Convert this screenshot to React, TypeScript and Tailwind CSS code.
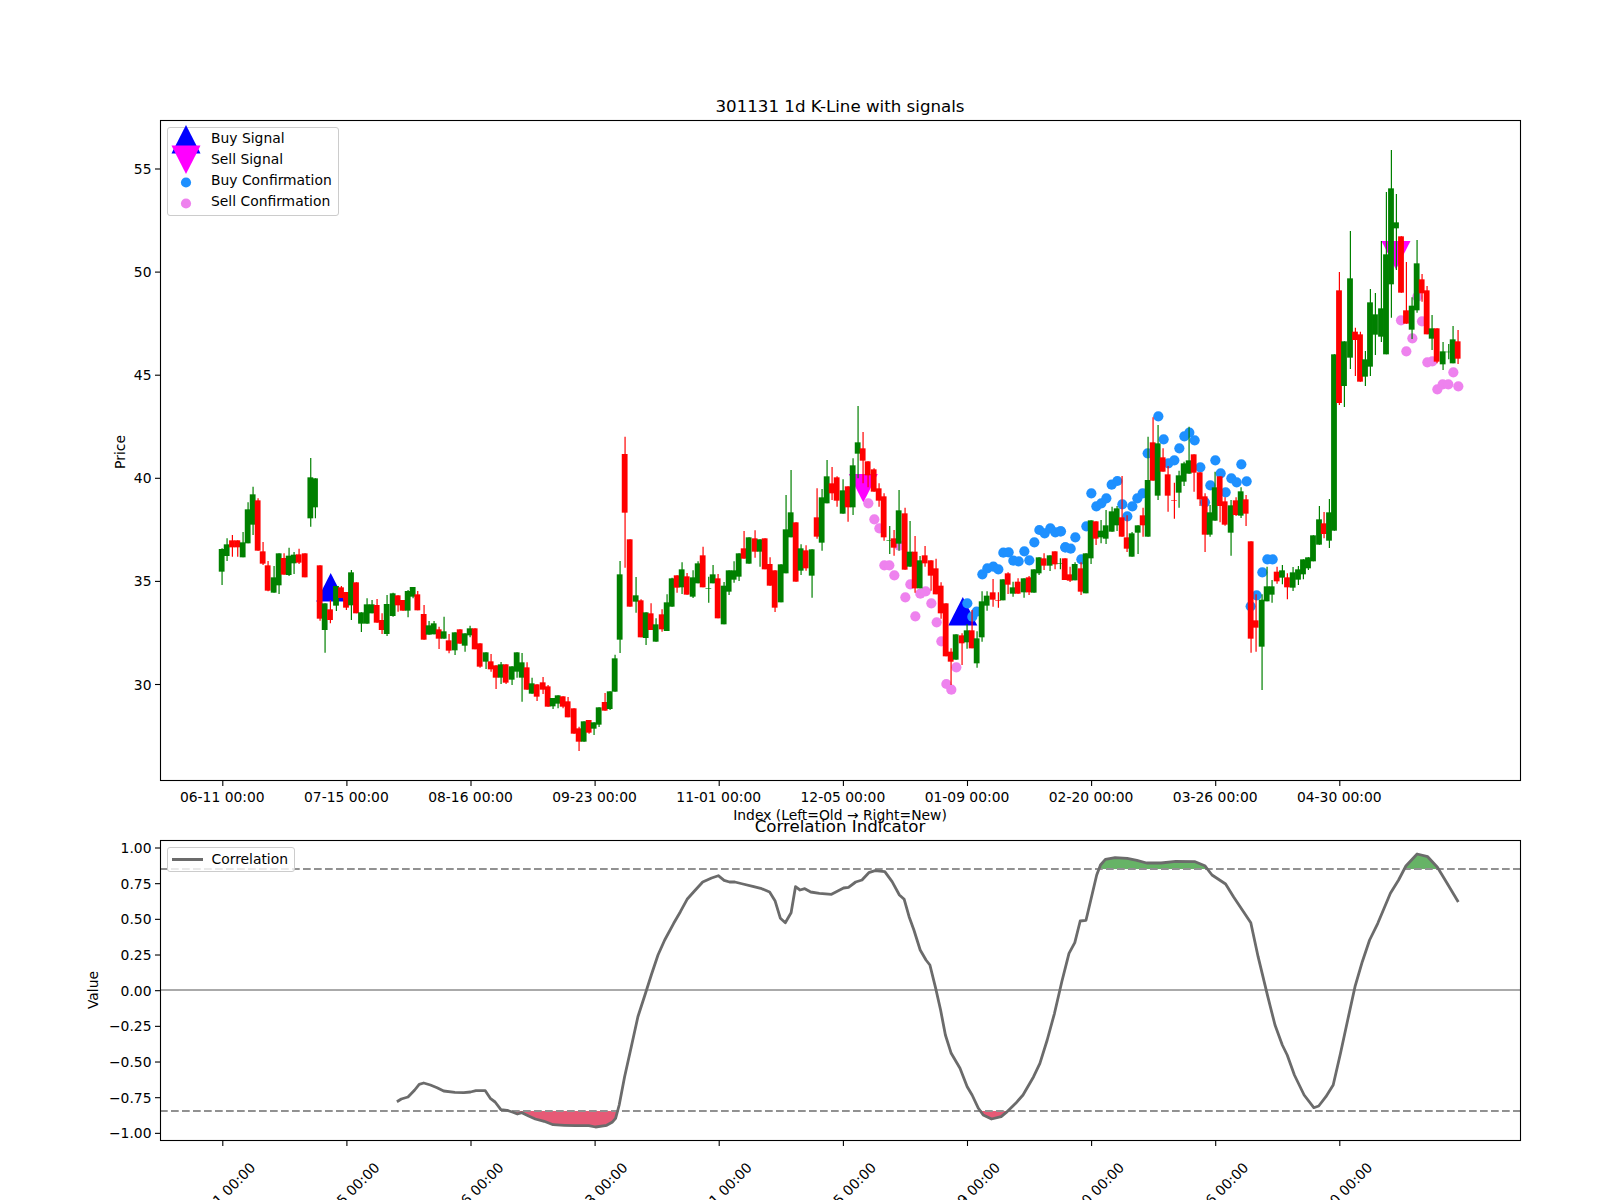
import React from "react";

type Candle = { x: number; green: boolean; wt: number; bt: number; bb: number; wb: number };

const parse = (ox: number, oy: number, s: string): Candle[] =>
  s.split(";").map((r) => r.trim()).filter(Boolean).map((r) => {
    const [x, c, wt, bt, bb, wb] = r.split(/\s+/);
    return { x: ox + +x / 3, green: c === "G", wt: oy + +wt / 3, bt: oy + +bt / 3, bb: oy + +bb / 3, wb: oy + +wb / 3 };
  });

const candles: Candle[] = [
  ...parse(200, 450, `65 G 295 297 365 405;80 G 265 283 318 333;96 R 255 271 292 320;112 R 271 271 292 320;128 G 246 277 322 322;143 G 157 178 280 280;158 G 110 133 224 255;173 R 145 151 302 302;188 R 276 304 341 345;203 R 333 346 422 424;221 G 348 382 428 428;236 G 310 310 406 432;251 R 310 324 374 374;266 G 293 317 375 378;281 G 306 314 340 372;296 R 296 313 338 342;314 R 310 310 382 382;331 G 24 82 205 230;345 G 85 85 172 205;359 R 346 346 506 512;374 G 460 460 540 608;390 R 450 478 510 520;408 G 408 408 467 483;423 R 408 412 444 444;438 R 426 426 473 480;453 G 360 367 466 510;468 R 397 397 490 490;483 G 487 487 521 546;500 G 445 463 521 521;515 G 450 463 490 490;530 R 447 465 518 518;545 R 490 510 540 552;560 G 435 462 552 558;578 G 428 430 498 500;593 R 436 436 466 485;608 R 450 450 482 482;623 G 420 423 482 502;638 G 411 411 440 445;652 R 423 433 481 481`),
  ...parse(420, 430, `11 R 525 552 629 629;26 G 573 586 614 614;41 G 573 580 613 613;56 R 590 598 626 657;71 G 560 604 626 626;86 R 612 631 662 670;104 G 607 607 661 675;119 R 598 598 641 641;134 G 610 610 647 665;149 G 587 595 616 622;164 R 595 595 658 658;179 R 640 640 710 713;197 G 667 667 695 717;212 R 672 694 718 725;227 R 706 706 743 777;242 G 696 703 743 762;257 R 703 703 758 762;275 G 709 709 749 765;290 G 667 667 725 743;305 G 669 697 743 815;320 R 697 712 779 779;335 G 743 760 791 791;350 R 763 763 800 813;368 R 741 757 779 792;383 R 765 769 830 830;398 G 804 804 829 837;413 G 796 796 821 835;428 R 799 799 830 835;443 R 801 814 862 862;461 R 835 835 911 911;476 R 890 895 935 963;491 G 874 874 935 935;506 R 870 870 908 911;521 G 877 877 896 915;536 G 832 832 884 891;554 R 789 816 842 842;569 G 784 784 837 840;584 G 674 685 785 785;599 G 393 433 629 669;614 R 20 72 248 413;629 R 328 328 530 530;647 G 441 496 515 548`),
  ...parse(640, 400, `2 R 598 601 712 712;17 G 637 637 714 735;32 R 610 640 690 690;47 G 655 673 725 725;65 R 628 643 688 695;80 G 583 607 693 693;95 G 533 535 620 620;110 R 526 526 563 578;125 G 487 508 562 582;140 R 519 529 584 584;158 G 511 532 590 594;173 G 484 490 550 550;188 R 440 466 562 562;205 G 530 565 566 608;218 G 495 523 550 550;233 R 522 535 655 655;251 G 546 557 673 673;266 G 511 511 575 585;281 G 484 511 539 548;296 G 460 460 530 543;311 R 393 445 476 476;326 G 412 412 491 491;344 R 391 415 455 473;359 G 418 418 455 500;374 R 415 415 508 508;389 R 472 492 557 557;404 R 511 511 623 636;422 G 493 493 607 607;437 G 285 388 520 520;452 G 210 337 412 412;467 R 367 367 545 545;482 G 433 445 512 525;497 R 436 451 505 512;515 G 448 448 527 593;530 R 265 352 410 416;545 G 267 292 428 452;560 G 180 229 310 310;575 R 201 250 280 300;590 R 229 232 302 320;608 G 238 271 341 341;623 R 259 259 322 365;638 G 175 196 322 345;653 G 18 127 161 235`),
  ...parse(850, 400, `38 R 96 145 182 250;53 R 184 184 226 262;71 R 205 208 275 275;86 R 250 265 302 320;101 R 280 289 412 422;118 G 378 420 421 462;131 R 390 415 443 467;146 G 270 331 431 452;164 R 323 340 509 509;179 G 363 455 500 500;194 R 408 455 565 578;209 G 468 481 565 565;224 R 438 466 490 500;242 R 481 481 527 572;257 R 476 505 583 583;272 R 547 557 640 656;287 R 610 610 769 769;302 R 745 755 785 855;317 G 703 703 779 779;335 R 700 706 730 795;350 G 672 691 727 746;365 R 630 691 745 745;380 G 694 715 790 803;395 G 574 604 712 725;410 G 574 587 617 632;428 R 537 577 599 620;444 R 577 600 601 623;458 G 538 538 601 601;473 R 517 520 554 582;488 G 545 562 581 590;503 R 535 545 581 581;521 G 535 535 577 593;536 R 528 532 577 585;551 G 508 508 578 578;566 G 472 472 520 525;581 R 460 475 497 510;599 G 466 466 497 513;614 R 454 454 493 508;630 G 475 490 491 508`),
  ...parse(1060, 400, `14 R 475 475 540 540;29 R 500 523 542 546;44 G 487 492 541 541;62 R 487 505 575 585;77 G 460 460 580 580;92 G 361 361 475 492;107 R 364 364 416 435;122 G 360 392 412 430;137 G 330 376 416 432;155 G 320 334 395 395;170 G 318 325 376 393;185 R 228 352 410 410;200 R 346 412 446 456;215 G 396 400 470 470;233 G 376 376 398 462;248 R 323 346 376 410;263 G 110 240 410 410;278 R 52 127 242 242;293 G 75 130 287 300;308 R 145 172 215 215;323 R 198 223 287 335;342 R 248 300 301 356;356 G 212 226 278 323;371 G 185 190 245 258;386 G 80 181 221 221;401 R 163 163 218 275;419 R 217 217 298 318;434 R 280 289 404 456;449 G 315 337 404 410;464 G 215 262 362 362;479 R 229 229 318 367;494 R 292 304 374 377;512 G 300 316 398 467;527 R 292 301 345 348;542 G 262 274 347 354;557 R 285 298 341 378;572 R 424 424 716 758;587 R 583 661 683 755;605 G 583 599 740 870;620 G 500 559 604 604;635 G 540 559 584 608;650 R 500 515 544 551`),
  ...parse(1270, 490, `36 G 225 241 263 283;51 R 250 262 292 328;68 G 231 247 293 303;84 G 228 238 269 285;99 G 208 208 253 268;114 G 202 202 235 240;129 G 136 136 214 214;147 G 48 88 164 164;161 R 66 100 132 145;177 G 27 67 152 174`),
  ...parse(1250, 140, `252 G 643 643 1172 1172;267 R 396 451 789 795;282 G 604 604 738 801;300 G 273 415 653 687;315 R 563 575 600 708;330 R 575 583 725 725;345 G 633 658 710 738;360 G 447 487 680 708;375 G 459 523 584 645;393 G 303 505 590 606;408 G 156 343 643 643;423 G 30 145 433 533;438 G 162 247 265 390;453 R 289 289 458 458;468 R 366 511 551 551;485 G 472 497 569 597;500 G 300 370 511 518;515 R 402 418 460 485;530 R 438 451 583 583;545 G 525 565 596 630;560 R 565 565 665 670;578 G 606 634 673 690;595 G 612 635 636 658;608 G 558 598 670 670;623 R 570 604 656 672`),
];

const dots = (ox: number, oy: number, s: string) =>
  s.split(";").map((r) => { const [x, y] = r.split(",").map(Number); return [ox + x / 3, oy + y / 3]; });

const blueDots = [
  ...dots(850, 400, "352,610;367,650;380,635;397,523;412,505;430,500;445,508;460,458;476,457;490,482;506,484;523,454;538,481;553,427;568,390;584,400;601,385;616,397;631,394;646,442"),
  ...dots(1060, 400, "3,394;16,442;32,446;46,412;64,478;79,379;94,280;109,319;124,310;139,295;155,254;172,243;187,313;202,349;217,319;232,295;248,280;263,160;295,49;311,118;325,190;343,181;358,145;373,109;388,98;404,121;421,202;435,307;451,256;466,181;482,220;497,277;514,235;530,247;544,193;560,244;572,619;590,586;607,517;622,478;638,478"),
];
const pinkDots = [
  ...dots(850, 400, "55,310;73,358;88,385;103,496;118,496;133,526;148,437;166,592;181,553;196,649;211,581;227,574;244,610;260,667;274,724;289,852;304,869;319,802"),
  ...dots(1250, 140, "453,541;469,634;487,595;502,470;516,544;532,667;547,664;562,748;578,733;595,733;610,697;625,739"),
];

const line = (ox: number, sx: number, s: string) =>
  s.split(";").map((r) => { const [x, y] = r.split(",").map(Number); return [ox + x / sx, 780 + y / 3]; });

const corr = [
  ...line(100, 2.24, "665,965;675,957;690,951;705,930;715,913;725,909;740,915;755,923;770,933;795,937;815,938;830,936;842,932;863,932;875,956;885,966;898,989;912,991;925,997;935,1002;945,998;960,1008;975,1017;995,1024;1015,1034;1040,1036;1065,1037;1095,1037;1110,1041;1135,1036;1147,1027;1155,1015;1163,975;1175,890;1190,800;1205,710;1222,640;1235,585;1250,525;1265,480;1285,430;1300,395;1315,358;1330,335;1350,306;1370,294;1385,287;1398,301;1410,306;1422,306;1440,312;1462,319;1480,325;1500,336;1512,362;1524,415;1535,428;1548,398;1558,320"),
  ...line(800, 2.063, "0,330;10,326;22,336;40,340;65,343;90,324;100,322;115,306;128,300;142,278;155,272;175,275;190,305;205,345;215,358;225,410;235,450;248,510;260,540;268,555;280,625;290,690;300,765;312,820;330,865;345,920;355,945;368,985;378,1005;395,1017;415,1010;425,998;445,970;460,945;482,890;495,850;510,780;525,700;540,605;555,520;567,488;578,423;590,421;600,360;612,285;620,255;630,238;650,233;675,235;695,241;715,249;745,249;775,244;815,245;835,257;850,285;878,312;895,352;915,395;930,428;945,530;965,650;980,735;995,795;1005,825;1020,885;1040,945;1060,983;1070,978;1085,950;1100,915;1115,820;1130,720;1145,620;1160,545;1175,480;1192,430;1205,385;1218,340;1235,300;1250,258;1273,222;1295,230;1315,262;1335,310;1358,366"),
];

const toPts = (p: number[][]) => p.map((q) => q.map((v) => v.toFixed(1)).join(",")).join(" ");

const regions = (thr: number, above: boolean) => {
  const out: number[][][] = [];
  let cur: number[][] = [];
  const inside = (y: number) => (above ? y < thr : y > thr);
  corr.forEach((p, i) => {
    const prev = corr[i - 1];
    if (prev && inside(prev[1]) !== inside(p[1])) {
      const t = (thr - prev[1]) / (p[1] - prev[1]);
      const cross = [prev[0] + t * (p[0] - prev[0]), thr];
      cur.push(cross);
      if (cur.length > 2) out.push(cur);
      cur = inside(p[1]) ? [cross] : [];
    }
    if (inside(p[1])) cur.push(p);
  });
  return out;
};

const ticksX = [222.8, 346.9, 471, 595.1, 719.2, 843.4, 967.5, 1091.6, 1215.7, 1339.8];
const labelsX = ["06-11 00:00", "07-15 00:00", "08-16 00:00", "09-23 00:00", "11-01 00:00", "12-05 00:00", "01-09 00:00", "02-20 00:00", "03-26 00:00", "04-30 00:00"];
const priceTicks = [55, 50, 45, 40, 35, 30];
const py = (p: number) => 169 + (55 - p) * 20.62;
const corrTicks = ["1.00", "0.75", "0.50", "0.25", "0.00", "−0.25", "−0.50", "−0.75", "−1.00"];
const cy = (i: number) => 848 + i * 35.67;

const Up = ({ cx, top, h = 28.5, w = 29 }: { cx: number; top: number; h?: number; w?: number }) => (
  <polygon points={`${cx},${top} ${cx + w / 2},${top + h} ${cx - w / 2},${top + h}`} fill="#0000ff" />
);
const Down = ({ cx, top, h = 28.5, w = 29 }: { cx: number; top: number; h?: number; w?: number }) => (
  <polygon points={`${cx - w / 2},${top} ${cx + w / 2},${top} ${cx},${top + h}`} fill="#ff00ff" />
);

const legendItems = [
  { label: "Buy Signal", icon: <Up cx={15} top={-3} /> },
  { label: "Sell Signal", icon: <Down cx={15} top={-3.5} /> },
  { label: "Buy Confirmation", icon: <circle cx={15} cy={12.5} r={5.1} fill="#1e90ff" /> },
  { label: "Sell Confirmation", icon: <circle cx={15} cy={12.5} r={5.1} fill="#ee82ee" /> },
];

export default function App() {
  return (
    <div className="w-[1600px] h-[1200px] bg-white overflow-hidden flex flex-col font-['DejaVu_Sans',sans-serif] text-[13.89px] text-black">
      <section className="relative h-[815px] shrink-0">
        <svg width={1600} height={815} viewBox="0 0 1600 815" className="block overflow-visible">
          <text x={840} y={112} textAnchor="middle" className="text-[16.67px]">301131 1d K-Line with signals</text>
          <Up cx={330.7} top={573} />
          <Up cx={962.8} top={597} />
          <Down cx={863.3} top={474} />
          <Down cx={1396} top={241} />
          {pinkDots.map(([x, y], i) => <circle key={i} cx={x} cy={y} r={5.1} fill="#ee82ee" />)}
          {blueDots.map(([x, y], i) => <circle key={i} cx={x} cy={y} r={5.1} fill="#1e90ff" />)}
          {candles.map((c, i) => {
            const col = c.green ? "#008000" : "#ff0000";
            return (
              <g key={i}>
                <line x1={c.x + 0.4} x2={c.x + 0.4} y1={c.wt} y2={c.wb} stroke={col} strokeWidth={1.2} />
                <rect x={c.x - 2.9} y={c.bt} width={5.8} height={Math.max(c.bb - c.bt, 0.6)} fill={col} />
              </g>
            );
          })}
          <rect x={160.5} y={120.5} width={1360} height={660} fill="none" stroke="#000" strokeWidth={1.1} />
          {priceTicks.map((p) => (
            <g key={p}>
              <line x1={155} x2={160} y1={py(p)} y2={py(p)} stroke="#000" strokeWidth={1.1} />
              <text x={151.5} y={py(p) + 5} textAnchor="end">{p}</text>
            </g>
          ))}
          {ticksX.map((x, i) => (
            <g key={i}>
              <line x1={x} x2={x} y1={781} y2={786} stroke="#000" strokeWidth={1.1} />
              <text x={x - 0.5} y={801.5} textAnchor="middle">{labelsX[i]}</text>
            </g>
          ))}
          <text transform="translate(125 452) rotate(-90)" textAnchor="middle">Price</text>
          <text x={840} y={820} textAnchor="middle">Index (Left=Old → Right=New)</text>
        </svg>
        <div className="absolute left-[167px] top-[127px] w-[172px] h-[88.5px] rounded-[3px] border border-[#cccccc] bg-white/80 flex flex-col">
          {legendItems.map((it) => (
            <div key={it.label} className="flex items-center h-[21px] pl-[3.4px] gap-[9.6px] leading-none">
              <svg width={30} height={21} className="overflow-visible shrink-0">{it.icon}</svg>
              <span>{it.label}</span>
            </div>
          ))}
        </div>
      </section>
      <section className="relative h-[385px] shrink-0">
        <svg width={1600} height={385} viewBox="0 815 1600 385" className="block overflow-visible">
          <text x={840} y={832} textAnchor="middle" className="text-[16.67px]">Correlation Indicator</text>
          {regions(1111, false).map((r, i) => <polygon key={i} points={toPts(r)} fill="#dc143c" fillOpacity={0.7} />)}
          {regions(869, true).map((r, i) => <polygon key={i} points={toPts(r)} fill="#008000" fillOpacity={0.6} />)}
          <line x1={160} x2={1520} y1={990} y2={990} stroke="#aaaaaa" strokeWidth={2} />
          <line x1={160} x2={1520} y1={869} y2={869} stroke="#919191" strokeWidth={2} strokeDasharray="7.7 3.3" />
          <line x1={160} x2={1520} y1={1111} y2={1111} stroke="#919191" strokeWidth={2} strokeDasharray="7.7 3.3" />
          <polyline points={toPts(corr)} fill="none" stroke="#6b6b6b" strokeWidth={2.8} strokeLinejoin="round" />
          <rect x={160.5} y={840.5} width={1360} height={300} fill="none" stroke="#000" strokeWidth={1.1} />
          {corrTicks.map((t, i) => (
            <g key={t}>
              <line x1={155} x2={160} y1={cy(i)} y2={cy(i)} stroke="#000" strokeWidth={1.1} />
              <text x={151.5} y={cy(i) + 5} textAnchor="end">{t}</text>
            </g>
          ))}
          {ticksX.map((x, i) => (
            <g key={i}>
              <line x1={x} x2={x} y1={1141} y2={1146} stroke="#000" strokeWidth={1.1} />
              <text transform={`translate(${x} 1195) rotate(-45)`} y={5} textAnchor="middle">{labelsX[i]}</text>
            </g>
          ))}
          <text transform="translate(98 990) rotate(-90)" textAnchor="middle">Value</text>
        </svg>
        <div className="absolute left-[167px] top-[32px] w-[128px] h-[25px] rounded-[3px] border border-[#cccccc] bg-white/80 flex items-center pl-[4px] gap-[9px] leading-none">
          <div className="w-[30.5px] h-[3px] bg-[#6b6b6b]" />
          <span>Correlation</span>
        </div>
      </section>
    </div>
  );
}
